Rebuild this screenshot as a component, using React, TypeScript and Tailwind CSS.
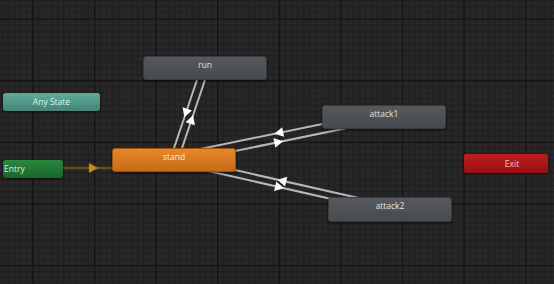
import React from "react";

type P = [number, number];

function Arrow({ a, b, t, color = "#ffffff", size = 9 }: { a: P; b: P; t: number; color?: string; size?: number }) {
  const dx = b[0] - a[0];
  const dy = b[1] - a[1];
  const len = Math.hypot(dx, dy);
  const ux = dx / len;
  const uy = dy / len;
  const cx = a[0] + dx * t;
  const cy = a[1] + dy * t;
  const h = size / 2;
  const tip: P = [cx + ux * h, cy + uy * h];
  const bx = cx - ux * h;
  const by = cy - uy * h;
  const w = size * 0.55;
  const l: P = [bx - uy * w, by + ux * w];
  const r: P = [bx + uy * w, by - ux * w];
  return <polygon points={`${tip[0]},${tip[1]} ${l[0]},${l[1]} ${r[0]},${r[1]}`} fill={color} />;
}

function Line({ a, b }: { a: P; b: P }) {
  return <line x1={a[0]} y1={a[1]} x2={b[0]} y2={b[1]} stroke="#b8b8b8" strokeWidth={2} />;
}

export default function App() {
  const runL: [P, P] = [[201, 68], [170, 160]];
  const runR: [P, P] = [[178, 160], [209, 68]];
  const a1U: [P, P] = [[383.5, 111.4], [174, 154.4]];
  const a1L: [P, P] = [[174, 163.5], [383.5, 120.6]];
  const a2U: [P, P] = [[389.5, 205.1], [174, 156.2]];
  const a2L: [P, P] = [[174, 163.2], [389.5, 212.2]];

  const font = { fontFamily: '"Open Sans", "Noto Sans", "DejaVu Sans", sans-serif' };

  return (
    <div className="relative w-[554px] h-[284px] overflow-hidden bg-[#272727]" style={font}>
      <svg className="absolute inset-0" width={554} height={284}>
        <defs>
          <pattern id="minor" x={32.3} y={18.5} width={6.16} height={6.16} patternUnits="userSpaceOnUse">
            <path d="M 0 0.5 H 6.16 M 0.5 0 V 6.16" stroke="#1e1e1e" strokeWidth={1} fill="none" />
          </pattern>
          <pattern id="major" x={32.3} y={18.5} width={61.6} height={61.6} patternUnits="userSpaceOnUse">
            <path d="M 0 0.5 H 61.6 M 0.5 0 V 61.6" stroke="#131313" strokeWidth={1.4} fill="none" />
          </pattern>
        </defs>
        <rect width={554} height={284} fill="url(#minor)" />
        <rect width={554} height={284} fill="url(#major)" />

        <line x1={63} y1={168} x2={113} y2={168} stroke="#6e4e14" strokeWidth={2.5} />
        <polygon points="98,168 89,163 89,173" fill="#c48c10" />

        <Line a={runL[0]} b={runL[1]} />
        <Line a={runR[0]} b={runR[1]} />
        <Line a={a1U[0]} b={a1U[1]} />
        <Line a={a1L[0]} b={a1L[1]} />
        <Line a={a2U[0]} b={a2U[1]} />
        <Line a={a2L[0]} b={a2L[1]} />

        <Arrow a={runL[0]} b={runL[1]} t={0.49} />
        <Arrow a={runR[0]} b={runR[1]} t={0.44} />
        <Arrow a={a1U[0]} b={a1U[1]} t={0.5} />
        <Arrow a={a1L[0]} b={a1L[1]} t={0.5} />
        <Arrow a={a2U[0]} b={a2U[1]} t={0.5} />
        <Arrow a={a2L[0]} b={a2L[1]} t={0.49} />
      </svg>

      <div className="absolute left-[3px] top-[93px] w-[97px] h-[18px] rounded-[3px] bg-gradient-to-b from-[#62ab9b] to-[#3f8676] shadow-[0_1px_3px_rgba(0,0,0,0.6)] flex items-center justify-center text-[8.5px] leading-[10px] text-[#dff2ec]">
        Any State
      </div>

      <div className="absolute left-[3px] top-[160px] w-[60px] h-[18px] rounded-[3px] bg-gradient-to-b from-[#268a3c] to-[#17672a] shadow-[0_1px_3px_rgba(0,0,0,0.6)] flex items-center pl-[1px] text-[8.5px] leading-[10px] text-[#d8f0dc]">
        Entry
      </div>

      <div className="absolute left-[143px] top-[56px] w-[124px] h-[24px] rounded-[3px] border border-[#3a3c40] bg-gradient-to-b from-[#55585d] to-[#474a4e] shadow-[0_1px_3px_rgba(0,0,0,0.6)] pt-[3px] text-center text-[8.5px] leading-[10px] text-[#e4e4e4]">
        run
      </div>

      <div className="absolute left-[112px] top-[148px] w-[124px] h-[24px] rounded-[3px] border border-[#9a5410] bg-gradient-to-b from-[#e3892b] to-[#c96b10] shadow-[0_1px_3px_rgba(0,0,0,0.6)] pt-[3px] text-center text-[8.5px] leading-[10px] text-[#fbeee0]">
        stand
      </div>

      <div className="absolute left-[322px] top-[105px] w-[124px] h-[24px] rounded-[3px] border border-[#3a3c40] bg-gradient-to-b from-[#55585d] to-[#474a4e] shadow-[0_1px_3px_rgba(0,0,0,0.6)] pt-[3px] text-center text-[8.5px] leading-[10px] text-[#e4e4e4]">
        attack1
      </div>

      <div className="absolute left-[328px] top-[197px] w-[124px] h-[25px] rounded-[3px] border border-[#3a3c40] bg-gradient-to-b from-[#55585d] to-[#474a4e] shadow-[0_1px_3px_rgba(0,0,0,0.6)] pt-[3px] text-center text-[8.5px] leading-[10px] text-[#e4e4e4]">
        attack2
      </div>

      <div className="absolute left-[464px] top-[154px] w-[84px] h-[19px] rounded-[2px] bg-gradient-to-b from-[#c21c1c] to-[#98100f] shadow-[0_1px_3px_rgba(0,0,0,0.6)] flex items-center justify-center pl-[12px] text-[8.5px] leading-[10px] text-[#f4caca]">
        Exit
      </div>
    </div>
  );
}
